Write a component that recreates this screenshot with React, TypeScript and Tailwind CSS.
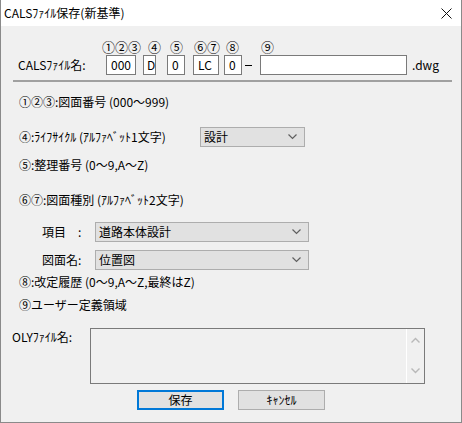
import React from "react";

const Chevron = ({ color = "#606060" }: { color?: string }) => (
  <svg width="9" height="6" viewBox="0 0 9 6" className="shrink-0">
    <polyline points="0.5,0.5 4.5,4.5 8.5,0.5" fill="none" stroke={color} strokeWidth="1.2" />
  </svg>
);

const ChevronUp = ({ color = "#b8b8b8" }: { color?: string }) => (
  <svg width="9" height="6" viewBox="0 0 9 6">
    <polyline points="0.5,5.5 4.5,1.5 8.5,5.5" fill="none" stroke={color} strokeWidth="1.4" />
  </svg>
);

const Select = ({ w, text }: { w: string; text: string }) => (
  <div className={`${w} h-[20px] border border-[#adadad] bg-[#e1e1e1] flex items-center pl-[3px] pr-[7px] justify-between`}>
    <span className="leading-[12px]">{text}</span>
    <Chevron />
  </div>
);

const Box = ({ w, text }: { w: string; text?: string }) => (
  <div className={`${w} h-[20px] border border-[#7a7a7a] bg-white flex items-center pl-[4px] leading-[12px]`}>
    {text}
  </div>
);

export default function App() {
  return (
    <div
      className="w-[462px] h-[423px] bg-[#f0f0f0] border-x border-b border-[#8a8a8a] flex flex-col text-[12px] text-black overflow-hidden"
      style={{ fontFamily: '"Noto Sans CJK JP", "Noto Sans", sans-serif' }}
    >
      {/* title bar */}
      <div className="h-[26px] bg-white flex items-center justify-between pl-[3px] pr-[9px] shrink-0">
        <span className="leading-[12px]">CALSﾌｧｲﾙ保存(新基準)</span>
        <svg width="11" height="11" viewBox="0 0 11 11">
          <line x1="0.5" y1="0.5" x2="10.5" y2="10.5" stroke="#111" strokeWidth="1" />
          <line x1="10.5" y1="0.5" x2="0.5" y2="10.5" stroke="#111" strokeWidth="1" />
        </svg>
      </div>

      {/* circled labels */}
      <div className="mt-[15px] h-[12px] flex leading-[12px] pl-[101px] text-[13px]">
        <span className="w-[38px]">①②③</span>
        <span className="ml-[8px] w-[13px]">④</span>
        <span className="ml-[9px] w-[13px]">⑤</span>
        <span className="ml-[11px] w-[26px]">⑥⑦</span>
        <span className="ml-[6px] w-[13px]">⑧</span>
        <span className="ml-[22px] w-[13px]">⑨</span>
      </div>

      {/* file name inputs */}
      <div className="mt-[2px] h-[20px] flex items-center pl-[17px]">
        <span className="w-[88px] leading-[12px]">CALSﾌｧｲﾙ名:</span>
        <Box w="w-[30px]" text="000" />
        <div className="w-[7px]" />
        <div className="w-[13px] h-[20px] border border-[#7a7a7a] bg-white flex items-center pl-[3px] leading-[12px]">D</div>
        <div className="w-[11px]" />
        <div className="w-[18px] h-[20px] border border-[#7a7a7a] bg-white flex items-center pl-[4px] leading-[12px]">0</div>
        <div className="w-[8px]" />
        <Box w="w-[26px]" text="LC" />
        <div className="w-[5px]" />
        <div className="w-[18px] h-[20px] border border-[#7a7a7a] bg-white flex items-center pl-[4px] leading-[12px]">0</div>
        <div className="w-[3px]" />
        <div className="w-[7px] h-[1px] bg-black" />
        <div className="w-[8px]" />
        <Box w="w-[147px]" />
        <span className="ml-[5px] leading-[12px]">.dwg</span>
      </div>

      {/* separator */}
      <div className="mt-[5px] h-[2px] bg-[#a0a0a0] ml-[12px] mr-[9px]" />

      <div className="mt-[14px] h-[12px] leading-[12px] pl-[18px]">①②③:図面番号 (000〜999)</div>

      <div className="mt-[19px] h-[20px] flex items-center pl-[18px]">
        <span className="w-[181px] leading-[12px]">④:ﾗｲﾌｻｲｸﾙ (ｱﾙﾌｧﾍﾞｯﾄ1文字)</span>
        <Select w="w-[105px]" text="設計" />
      </div>

      <div className="mt-[12px] h-[12px] leading-[12px] pl-[18px]">⑤:整理番号 (0〜9,A〜Z)</div>

      <div className="mt-[23px] h-[12px] leading-[12px] pl-[18px]">⑥⑦:図面種別 (ｱﾙﾌｧﾍﾞｯﾄ2文字)</div>

      <div className="mt-[16px] h-[20px] flex items-center pl-[41px]">
        <span className="w-[53px] leading-[12px]">項目　:</span>
        <Select w="w-[214px]" text="道路本体設計" />
      </div>

      <div className="mt-[8px] h-[20px] flex items-center pl-[41px]">
        <span className="w-[53px] leading-[12px]">図面名:</span>
        <Select w="w-[214px]" text="位置図" />
      </div>

      <div className="mt-[6px] h-[12px] leading-[12px] pl-[18px]">⑧:改定履歴 (0〜9,A〜Z,最終はZ)</div>

      <div className="mt-[11px] h-[12px] leading-[12px] pl-[18px]">⑨ユーザー定義領域</div>

      <div className="mt-[17px] h-[56px] flex items-start pl-[11px]">
        <span className="w-[78px] mt-[3px] leading-[12px]">OLYﾌｧｲﾙ名:</span>
        <div className="w-[335px] h-[56px] border border-[#7a7a7a] bg-[#f0f0f0] flex justify-end">
          <div className="w-[18px] h-full border-l border-white flex flex-col items-center justify-between pt-[8px] pb-[9px]">
            <ChevronUp />
            <svg width="9" height="6" viewBox="0 0 9 6">
              <polyline points="0.5,0.5 4.5,4.5 8.5,0.5" fill="none" stroke="#b8b8b8" strokeWidth="1.4" />
            </svg>
          </div>
        </div>
      </div>

      <div className="mt-[6px] h-[20px] flex pl-[136px]">
        <div className="w-[87px] h-[20px] border-2 border-[#0078d7] bg-[#e1e1e1] flex items-center justify-center leading-[12px]">
          保存
        </div>
        <div className="w-[14px]" />
        <div className="w-[87px] h-[20px] border border-[#adadad] bg-[#e1e1e1] flex items-center justify-center leading-[12px]">
          ｷｬﾝｾﾙ
        </div>
      </div>
    </div>
  );
}
